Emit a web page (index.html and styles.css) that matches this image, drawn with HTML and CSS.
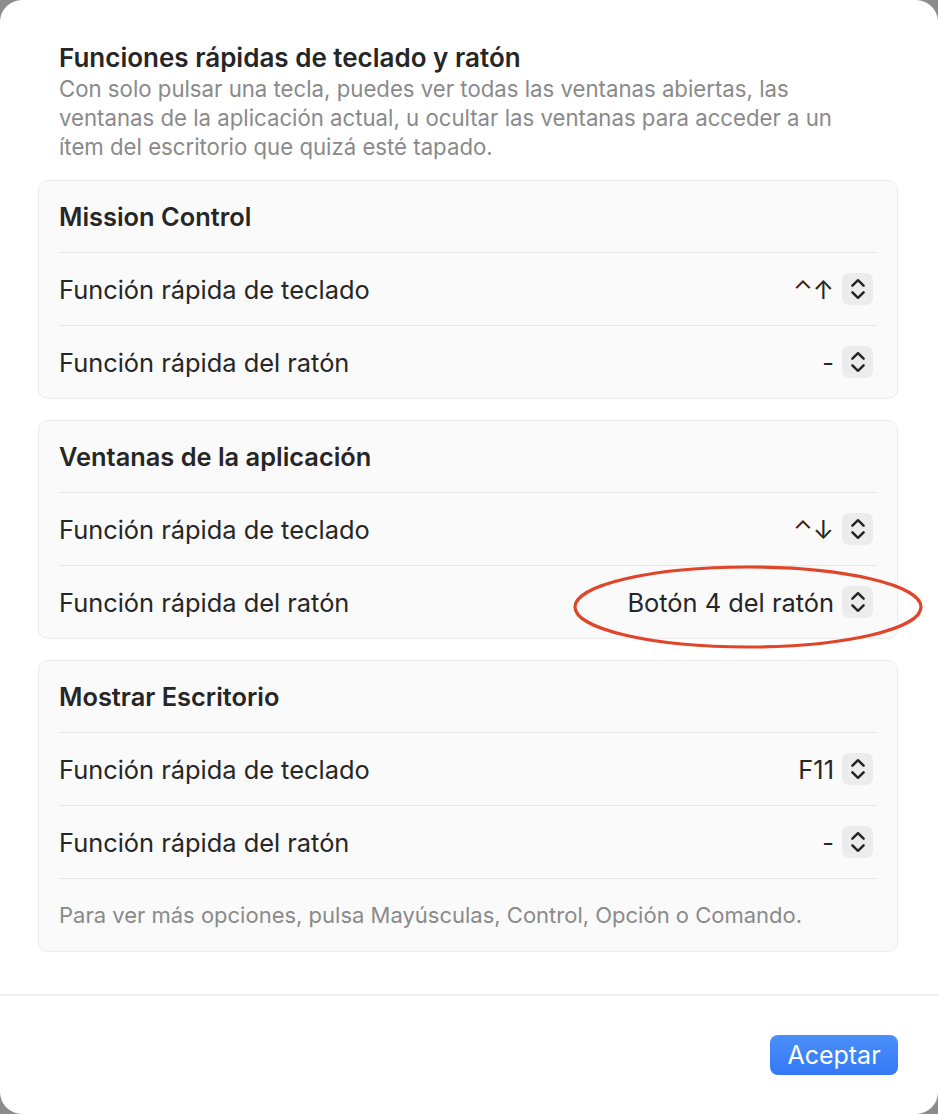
FILE: index.html
```html
<!DOCTYPE html>
<html lang="es">
<head>
    <meta charset="UTF-8">
    <title>Funciones rápidas de teclado y ratón</title>
    <link rel="stylesheet" href="styles.css">
</head>
<body>

<div class="window">
    <div class="content">
        <div class="intro">
            <h1>Funciones rápidas de teclado y ratón</h1>
            <p>Con solo pulsar una tecla, puedes ver todas las ventanas abiertas, las ventanas de la aplicación actual, u ocultar las ventanas para acceder a un ítem del escritorio que quizá esté tapado.</p>
        </div>

        <!-- Mission Control -->
        <div class="card">
            <div class="row head">Mission Control</div>
            <div class="row">
                <span>Función rápida de teclado</span>
                <div class="picker"><span class="value">⌃↑</span><span class="stepper"></span></div>
            </div>
            <div class="row">
                <span>Función rápida del ratón</span>
                <div class="picker"><span class="value">-</span><span class="stepper"></span></div>
            </div>
        </div>

        <!-- Ventanas de la aplicación -->
        <div class="card">
            <div class="row head">Ventanas de la aplicación</div>
            <div class="row">
                <span>Función rápida de teclado</span>
                <div class="picker"><span class="value">⌃↓</span><span class="stepper"></span></div>
            </div>
            <div class="row">
                <span>Función rápida del ratón</span>
                <div class="picker"><span class="value">Botón 4 del ratón</span><span class="stepper"></span>
                    <svg class="ring" width="352" height="86" viewBox="0 0 352 86"><ellipse cx="176" cy="43" rx="173" ry="40" fill="none" stroke="#e0452a" stroke-width="3.2"/></svg>
                </div>
            </div>
        </div>

        <!-- Mostrar Escritorio -->
        <div class="card">
            <div class="row head">Mostrar Escritorio</div>
            <div class="row">
                <span>Función rápida de teclado</span>
                <div class="picker"><span class="value">F11</span><span class="stepper"></span></div>
            </div>
            <div class="row">
                <span>Función rápida del ratón</span>
                <div class="picker"><span class="value">-</span><span class="stepper"></span></div>
            </div>
            <div class="row note">Para ver más opciones, pulsa Mayúsculas, Control, Opción o Comando.</div>
        </div>
    </div>

    <div class="footer">
        <button>Aceptar</button>
    </div>
</div>

<script>
    // same chevron pair in every stepper
    var chevrons = '<svg width="16" height="22" viewBox="0 0 16 22"><path d="M2.4 7.6 L8 2.2 L13.6 7.6 M2.4 14.4 L8 19.8 L13.6 14.4" fill="none" stroke="#242424" stroke-width="2.5" stroke-linecap="round" stroke-linejoin="round"/></svg>';
    document.querySelectorAll('.stepper').forEach(function (el) {
        el.innerHTML = chevrons;
    });
</script>

</body>
</html>
```

FILE: styles.css
```css
html {
    background: #8c8c8c;
}

body {
    margin: 0;
    font-family: 'Inter', 'Noto Sans', sans-serif;
    color: #262626;
}

.window {
    width: 938px;
    height: 1114px;
    background: #ffffff;
    border-radius: 22px;
    overflow: hidden;
    display: flex;
    flex-direction: column;
}

.content {
    padding: 42px 40px 0 38px;
    display: flex;
    flex-direction: column;
    gap: 21px;
    flex: 1;
}

.intro {
    padding: 0 30px 0 21px;
    margin-bottom: -2px;
}

.intro h1 {
    margin: 0;
    font-size: 26px;
    font-weight: 600;
    line-height: 32px;
}

.intro p {
    margin: 0;
    font-size: 22.2px;
    line-height: 29px;
    color: #8a8a8a;
}

.card {
    background: #fafafa;
    border: 1px solid #ebebeb;
    border-radius: 10px;
    padding: 0 20px;
}

.row {
    height: 72px;
    display: flex;
    align-items: center;
    justify-content: space-between;
    font-size: 25.4px;
    border-top: 1px solid #e6e6e6;
}

.row.head {
    height: 71px;
    border-top: none;
    font-weight: 600;
}

.row.note {
    font-size: 22px;
    color: #8a8a8a;
}

.picker {
    display: flex;
    align-items: center;
    gap: 8px;
    margin-right: 4px;
    position: relative;
}

.stepper {
    width: 31px;
    height: 32px;
    background: #ececec;
    border-radius: 7px;
    display: flex;
    align-items: center;
    justify-content: center;
}

.stepper svg {
    display: block;
}

.ring {
    position: absolute;
    right: -51px;
    top: -22px;
    pointer-events: none;
}

.footer {
    height: 118px;
    border-top: 2px solid #f0f0f0;
    display: flex;
    align-items: center;
    justify-content: flex-end;
    padding: 0 40px;
}

.footer button {
    font-family: 'Inter', 'Noto Sans', sans-serif;
    font-size: 25px;
    color: #ffffff;
    background: linear-gradient(#4b8ffa, #3478f6);
    border: none;
    border-radius: 8px;
    width: 128px;
    height: 40px;
    margin-top: -1px;
}
```
